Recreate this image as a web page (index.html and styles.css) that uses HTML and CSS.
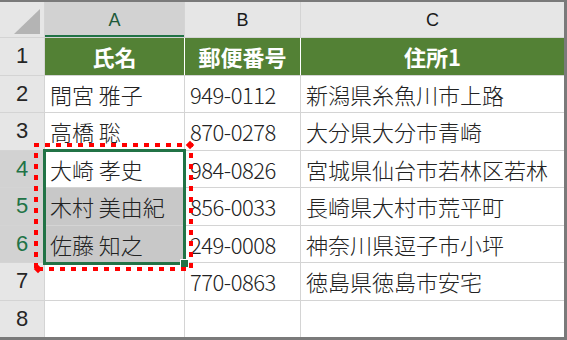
FILE: index.html
```html
<!DOCTYPE html>
<html lang="ja">
<head>
<meta charset="utf-8">
<link rel="stylesheet" href="styles.css">
</head>
<body>
<div class="frame">
  <div class="sheet">
    <div class="corner"><span class="tri"></span></div>
    <div class="colhead sel">A</div>
    <div class="colhead">B</div>
    <div class="colhead">C</div>

    <div class="rowhead">1</div>
    <div class="cell hdr">氏名</div>
    <div class="cell hdr sep">郵便番号</div>
    <div class="cell hdr sep">住所1</div>

    <div class="rowhead">2</div>
    <div class="cell">間宮 雅子</div>
    <div class="cell num">949-0112</div>
    <div class="cell">新潟県糸魚川市上路</div>

    <div class="rowhead">3</div>
    <div class="cell">高橋 聡</div>
    <div class="cell num">870-0278</div>
    <div class="cell">大分県大分市青崎</div>

    <div class="rowhead sel">4</div>
    <div class="cell">大崎 孝史</div>
    <div class="cell num">984-0826</div>
    <div class="cell">宮城県仙台市若林区若林</div>

    <div class="rowhead sel">5</div>
    <div class="cell hl">木村 美由紀</div>
    <div class="cell num">856-0033</div>
    <div class="cell">長崎県大村市荒平町</div>

    <div class="rowhead sel">6</div>
    <div class="cell hl">佐藤 知之</div>
    <div class="cell num">249-0008</div>
    <div class="cell">神奈川県逗子市小坪</div>

    <div class="rowhead">7</div>
    <div class="cell"></div>
    <div class="cell num">770-0863</div>
    <div class="cell">徳島県徳島市安宅</div>

    <div class="rowhead">8</div>
    <div class="cell"></div>
    <div class="cell"></div>
    <div class="cell"></div>
  </div>

  <div class="selbox"></div>
  <div class="handle"></div>

  <svg class="ants" width="567" height="340" viewBox="0 0 567 340">
    <path d="M38 269 L191 269 L191 145 L36 145 L36 269" fill="none" stroke="#ff0000" stroke-width="4" stroke-dasharray="5 6"/>
    <rect x="187" y="142" width="6" height="6" fill="#ff0000" transform="rotate(45 190 145)"/>
    <rect x="35" y="266" width="6" height="6" fill="#ff0000" transform="rotate(45 38 269)"/>
  </svg>
</div>
</body>
</html>
```

FILE: styles.css
```css
html, body {
  margin: 0;
  padding: 0;
  background: #ffffff;
}

.frame {
  position: relative;
  width: 567px;
  height: 340px;
  box-sizing: border-box;
  border-top: 2px solid #7a7a7a;
  border-right: 3px solid #7a7a7a;
  border-bottom: 3px solid #7a7a7a;
  overflow: hidden;
}

.sheet {
  display: grid;
  grid-template-columns: 44px 139px 115px 263px;
  grid-template-rows: 35px repeat(8, 36.5px);
  gap: 1px;
  background: #d4d4d4;
  font-family: "Noto Sans CJK JP", "Noto Sans", sans-serif;
}

.corner {
  background: #e6e6e6;
  position: relative;
}

.tri {
  position: absolute;
  right: 4px;
  bottom: 3px;
  width: 26px;
  height: 25px;
  background: #b4b4b4;
  clip-path: polygon(100% 0, 100% 100%, 0 100%);
}

.colhead {
  background: #e6e6e6;
  display: flex;
  align-items: center;
  justify-content: center;
  font-family: "Liberation Sans", Arial, sans-serif;
  font-size: 18px;
  color: #1a1a1a;
  padding-top: 1px;
}

.colhead.sel {
  background: #d2d2d2;
  color: #1f5a3a;
  box-shadow: inset 0 -2px 0 #217346;
}

.rowhead {
  background: #e6e6e6;
  display: flex;
  align-items: center;
  justify-content: center;
  font-family: "Liberation Sans", Arial, sans-serif;
  font-size: 22px;
  color: #262626;
}

.rowhead.sel {
  background: #d2d2d2;
  color: #217346;
}

.cell {
  background: #ffffff;
  display: flex;
  align-items: center;
  padding-left: 5px;
  font-size: 22px;
  font-weight: 300;
  color: #222222;
  white-space: nowrap;
  overflow: hidden;
}

.cell.num {
  letter-spacing: -0.5px;
}

.cell.hdr {
  background: #538135;
  color: #ffffff;
  font-weight: bold;
  justify-content: center;
  padding-left: 0;
}

.cell.hdr.sep {
  box-shadow: -1px 0 0 #ffffff;
}

.cell.hl {
  background: #c8c8c8;
}

.selbox {
  position: absolute;
  left: 43px;
  top: 147px;
  width: 143px;
  height: 116px;
  box-sizing: border-box;
  border: 3px solid #217346;
}

.handle {
  position: absolute;
  left: 180px;
  top: 257px;
  width: 7px;
  height: 7px;
  background: #217346;
  border: 1px solid #ffffff;
}

.ants {
  position: absolute;
  left: 0;
  top: -2px;
}
```
